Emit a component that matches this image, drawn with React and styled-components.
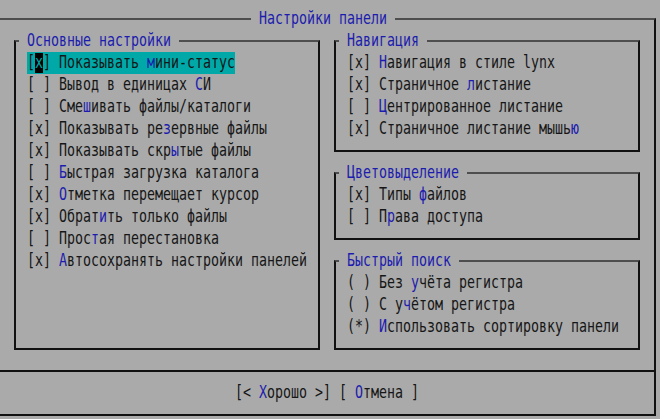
import styled, { createGlobalStyle } from "styled-components";

const GlobalStyle = createGlobalStyle`
  html, body {
    margin: 0;
    background: #aaaaaa;
  }
  body {
    overflow: hidden;
    font-family: "DejaVu Sans Mono", "Liberation Mono", monospace;
    font-size: 13.29px;
    color: #161616;
  }
`;

const Screen = styled.div`
  width: 660px;
  height: 419px;
  box-sizing: border-box;
  padding-top: 8px;
  overflow: hidden;
  background: #aaaaaa;
`;

const Dialog = styled.fieldset`
  margin: 0 0 0 -2px;
  width: 658px;
  min-width: 0;
  box-sizing: border-box;
  padding: 0 14px 10px;
  border: 2px solid #111;
  border-top-color: #4e4e4e;
`;

const DialogTitle = styled.legend`
  margin-left: 237px;
  padding: 0 8px;
  height: 22px;
  color: #1c1cae;
`;

const Columns = styled.div`
  display: grid;
  grid-template-columns: 1fr 1fr;
  column-gap: 14px;
`;

const Stack = styled.div`
  display: flex;
  flex-direction: column;
  gap: 10px;
`;

const Group = styled.fieldset`
  margin: 0;
  min-width: 0;
  padding: 0 0 10px;
  border: 2px solid #111;
  border-top-color: #4e4e4e;
`;

const GroupTitle = styled.legend`
  margin-left: 3px;
  padding: 0 8px;
  height: 22px;
  color: #1c1cae;
`;

const Items = styled.div`
  display: flex;
  flex-direction: column;
  padding-left: 11px;
`;

const Line = styled.div`
  display: flex;
  align-items: center;
  height: 22px;
  white-space: pre;
`;

const Focus = styled.div`
  display: flex;
  align-items: center;
  height: 22px;
  background: #00a8a8;
`;

const Cursor = styled.div`
  display: flex;
  align-items: center;
  justify-content: center;
  width: 8px;
  height: 20px;
  background: #000;
  color: #00a8a8;
`;

const Txt = styled.span`
  display: block;
  line-height: 22px;
  white-space: pre;
  transform: scaleY(1.33);
`;

const Hot = styled.span`
  color: #1c1cae;
`;

const Separator = styled.div`
  height: 2px;
  margin: 20px -14px 10px;
  background: #111;
`;

const Buttons = styled.div`
  display: flex;
  justify-content: center;
  height: 22px;
`;

// "&" marks the hotkey letter, like mc does
function Label({ text }) {
  const i = text.indexOf("&");
  return (
    <Txt>
      {text.slice(0, i)}
      <Hot>{text[i + 1]}</Hot>
      {text.slice(i + 2)}
    </Txt>
  );
}

function Option({ mark, label }) {
  return (
    <Line>
      <Txt>{mark} </Txt>
      <Label text={label} />
    </Line>
  );
}

const basic = [
  ["[ ]", "Вывод в единицах &СИ"],
  ["[ ]", "Сме&шивать файлы/каталоги"],
  ["[x]", "Показывать ре&зервные файлы"],
  ["[x]", "Показывать скр&ытые файлы"],
  ["[ ]", "&Быстрая загрузка каталога"],
  ["[x]", "&Отметка перемещает курсор"],
  ["[x]", "Обрат&ить только файлы"],
  ["[ ]", "Прос&тая перестановка"],
  ["[x]", "&Автосохранять настройки панелей"],
];

const navigation = [
  ["[x]", "&Навигация в стиле lynx"],
  ["[x]", "Страничное &листание"],
  ["[ ]", "&Центрированное листание"],
  ["[x]", "Страничное листание мышь&ю"],
];

const colors = [
  ["[x]", "Типы &файлов"],
  ["[ ]", "П&рава доступа"],
];

const search = [
  ["( )", "Без &учёта регистра"],
  ["( )", "С у&чётом регистра"],
  ["(*)", "&Использовать сортировку панели"],
];

function Box({ title, options }) {
  return (
    <Group>
      <GroupTitle>
        <Txt>{title}</Txt>
      </GroupTitle>
      <Items>
        {options.map(([mark, label]) => (
          <Option key={label} mark={mark} label={label} />
        ))}
      </Items>
    </Group>
  );
}

export default function App() {
  return (
    <Screen>
      <GlobalStyle />
      <Dialog>
        <DialogTitle>
          <Txt>Настройки панели</Txt>
        </DialogTitle>
        <Columns>
          <Group>
            <GroupTitle>
              <Txt>Основные настройки</Txt>
            </GroupTitle>
            <Items>
              <Line>
                <Focus>
                  <Txt>[</Txt>
                  <Cursor>
                    <Txt>x</Txt>
                  </Cursor>
                  <Txt>] </Txt>
                  <Label text="Показывать &мини-статус" />
                </Focus>
              </Line>
              {basic.map(([mark, label]) => (
                <Option key={label} mark={mark} label={label} />
              ))}
            </Items>
          </Group>
          <Stack>
            <Box title="Навигация" options={navigation} />
            <Box title="Цветовыделение" options={colors} />
            <Box title="Быстрый поиск" options={search} />
          </Stack>
        </Columns>
        <Separator />
        <Buttons>
          <Txt>[&lt; </Txt>
          <Label text="&Хорошо" />
          <Txt> &gt;] [ </Txt>
          <Label text="&Отмена" />
          <Txt> ]</Txt>
        </Buttons>
      </Dialog>
    </Screen>
  );
}
